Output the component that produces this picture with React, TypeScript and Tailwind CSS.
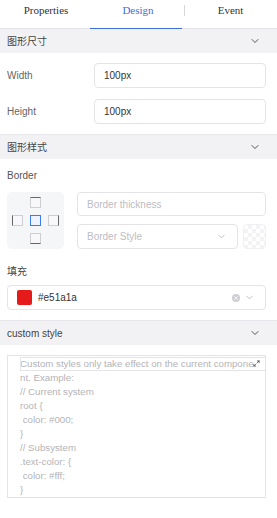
import { ChevronDown, Maximize2, X } from 'lucide-react';

const sans = { fontFamily: '"Liberation Sans", "Noto Sans CJK SC", sans-serif' };

const codeLines = [
  'Custom styles only take effect on the current compone',
  'nt. Example:',
  '// Current system',
  'root {',
  '\u00a0color: #000;',
  '}',
  '// Subsystem',
  '.text-color: {',
  '\u00a0color: #fff;',
  '}',
];

function SectionHeader({ title }: { title: string }) {
  return (
    <div className="flex h-[24px] items-center justify-between bg-[#f2f2f4] pl-[7px] pr-[16px] text-[10px] text-[#444]">
      <span>{title}</span>
      <ChevronDown size={12} strokeWidth={1.8} className="text-[#444]" />
    </div>
  );
}

function Square({ side, active }: { side?: 't' | 'l' | 'r' | 'b'; active?: boolean }) {
  const sideClass =
    side === 't'
      ? 'border-t-[#666]'
      : side === 'l'
        ? 'border-l-[#666]'
        : side === 'r'
          ? 'border-r-[#666]'
          : side === 'b'
            ? 'border-b-[#666]'
            : '';
  return (
    <div
      className={`h-[11px] w-[11px] border ${
        active ? 'border-[#3b7cf5] bg-[#eef3fe]' : `border-[#cfcfd3] bg-[#f8f8fa] ${sideClass}`
      }`}
    />
  );
}

export default function App() {
  return (
    <div className="h-[518px] w-[277px] overflow-hidden bg-white" style={sans}>
      {/* Tabs */}
      <div
        className="flex h-[29px] border-b border-[#e4e4e8] text-[11px] font-normal"
        style={{ fontFamily: '"Liberation Serif", "Times New Roman", serif' }}
      >
        <div className="flex w-[92px] items-center justify-center pb-[8px] text-[#333]">Properties</div>
        <div className="relative flex w-[92px] items-center justify-center pb-[8px] text-[#3d6fdc]">
          Design
          <span className="absolute bottom-[-1px] left-[-2px] right-[2px] h-[1.5px] bg-[#3d6fdc]" />
          <span className="absolute right-[-1px] top-[5px] h-[11px] w-px bg-[#d8d8dc]" />
        </div>
        <div className="flex flex-1 items-center justify-center pb-[8px] text-[#333]">Event</div>
      </div>

      <SectionHeader title="图形尺寸" />
      <div className="flex flex-col gap-[11px] pb-[10px] pl-[7px] pr-[11px] pt-[10px] text-[10px]">
        {['Width', 'Height'].map((l) => (
          <div key={l} className="flex items-center">
            <span className="w-[87px] text-[#666]">{l}</span>
            <div className="flex h-[25px] flex-1 items-center rounded-[4px] border border-[#e4e4e8] pl-[9px] text-[#333]">
              100px
            </div>
          </div>
        ))}
      </div>

      <div className="border-t border-[#e8e8ec]">
        <SectionHeader title="图形样式" />
      </div>
      <div className="pl-[7px] pr-[11px] pt-[10px] text-[10px]">
        <div className="h-[14px] leading-[14px] text-[#555]">Border</div>
        <div className="mt-[9px] flex gap-[13px]">
          <div className="grid h-[57px] w-[57px] grid-cols-[11px_11px_11px] content-center justify-center gap-[7px] rounded-[5px] bg-[#f5f6f8]">
            <span />
            <Square side="t" />
            <span />
            <Square side="l" />
            <Square active />
            <Square side="r" />
            <span />
            <Square side="b" />
            <span />
          </div>
          <div className="flex flex-1 flex-col gap-[8px]">
            <div className="flex h-[24px] items-center rounded-[4px] border border-[#e4e4e8] pl-[9px] text-[#bdbdc2]">
              Border thickness
            </div>
            <div className="flex gap-[5px]">
              <div className="flex h-[25px] flex-1 items-center justify-between rounded-[4px] border border-[#e4e4e8] pl-[9px] pr-[10px] text-[#bdbdc2]">
                <span>Border Style</span>
                <ChevronDown size={11} strokeWidth={1.3} className="text-[#999]" />
              </div>
              <div
                className="h-[25px] w-[23px] rounded-[4px] border border-[#f0f0f2]"
                style={{
                  backgroundImage:
                    'linear-gradient(45deg,#f3f3f5 25%,transparent 25%,transparent 75%,#f3f3f5 75%),linear-gradient(45deg,#f3f3f5 25%,transparent 25%,transparent 75%,#f3f3f5 75%)',
                  backgroundSize: '8px 8px',
                  backgroundPosition: '0 0,4px 4px',
                }}
              />
            </div>
          </div>
        </div>

        <div className="mt-[16px] h-[14px] leading-[14px] text-[#444]">填充</div>
        <div className="mt-[6px] flex h-[25px] items-center rounded-[4px] border border-[#e4e4e8] pl-[9px] pr-[10px] text-[#333]">
          <span className="h-[15px] w-[15px] rounded-[2px] bg-[#e51a1a]" />
          <span className="ml-[6px] flex-1">#e51a1a</span>
          <span className="flex h-[8px] w-[8px] items-center justify-center rounded-full bg-[#cfcfd3]">
            <X size={6} strokeWidth={3} className="text-white" />
          </span>
          <ChevronDown size={11} strokeWidth={1.3} className="ml-[4px] text-[#999]" />
        </div>
      </div>

      <div className="mt-[10px] border-t border-[#e8e8ec]">
        <SectionHeader title="custom style" />
      </div>
      <div className="pl-[7px] pr-[11px] pt-[10px]">
        <div className="relative h-[143px] border border-[#e4e4e8] pl-[12px] pt-[1px] text-[9.7px] leading-[14px] text-[#b4b4b8]">
          <div className="absolute left-[12px] right-[-1px] top-[1px] h-[14px] border border-[#e4e4e8]" />
          <Maximize2 size={7} strokeWidth={2.5} className="absolute right-[5px] top-[4px] text-[#444]" />
          {codeLines.map((l, i) => (
            <div key={i} className="whitespace-pre">
              {l}
            </div>
          ))}
        </div>
      </div>
    </div>
  );
}
